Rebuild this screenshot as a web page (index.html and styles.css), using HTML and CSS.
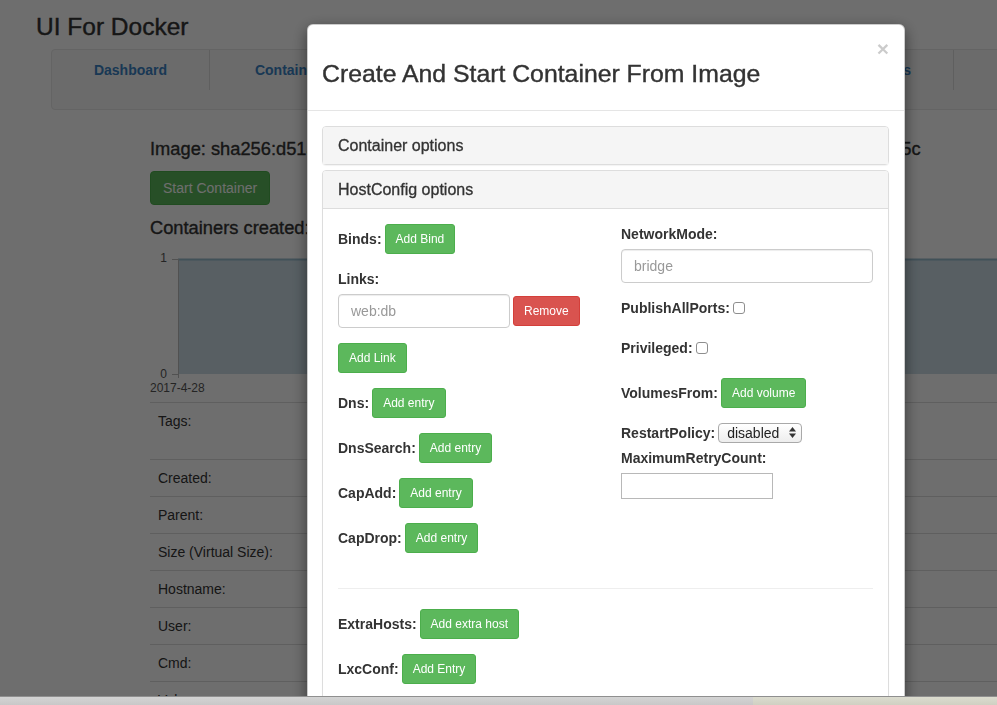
FILE: index.html
```html
<!DOCTYPE html>
<html>
<head>
<meta charset="utf-8">
<title>UI For Docker</title>
<link rel="stylesheet" href="styles.css">
</head>
<body>
<div class="page">
  <h1 class="brand">UI For Docker</h1>
  <nav class="topnav">
    <a class="tab tab-dash">Dashboard</a>
    <a class="tab tab-cont">Containers</a>
    <a class="tab tab-img">Images</a>
    <a class="tab tab-net">Networks</a>
    <a class="tab tab-vol">Volumes</a>
    <a class="tab tab-info">Info</a>
  </nav>
  <div class="content">
    <h3 class="image-title">Image: sha256:d51a7e3c9e2b4d6a8a0c1e3b5d7e9a2c4e6b8d0e1a3c5e7b9d2e4a6c8e0b135c</h3>
    <button class="btn btn-success btn-start">Start Container</button>
    <h3 class="sub-title">Containers created:</h3>
    <div class="chart">
      <svg class="chart-svg" width="850" height="162" viewBox="0 0 850 162">
        <rect x="28" y="19" width="822" height="115" fill="#cbdde6"/>
        <line x1="28" y1="19.5" x2="850" y2="19.5" stroke="#97bbcd" stroke-width="2"/>
        <line x1="28.5" y1="19" x2="28.5" y2="138" stroke="#bbbbbb" stroke-width="1"/>
        <line x1="22" y1="19.5" x2="28" y2="19.5" stroke="#bbbbbb" stroke-width="1"/>
        <line x1="22" y1="134.5" x2="28" y2="134.5" stroke="#bbbbbb" stroke-width="1"/>
        <text class="axis-label" x="17" y="22" text-anchor="end">1</text>
        <text class="axis-label" x="17" y="138" text-anchor="end">0</text>
        <text class="axis-label" x="0" y="152">2017-4-28</text>
      </svg>
    </div>
    <table class="details">
      <tr class="row-tall"><td>Tags:</td><td></td></tr>
      <tr><td>Created:</td><td></td></tr>
      <tr><td>Parent:</td><td></td></tr>
      <tr><td>Size (Virtual Size):</td><td></td></tr>
      <tr><td>Hostname:</td><td></td></tr>
      <tr><td>User:</td><td></td></tr>
      <tr><td>Cmd:</td><td></td></tr>
      <tr><td>Volumes:</td><td></td></tr>
    </table>
  </div>
</div>

<div class="backdrop"></div>

<div class="modal">
  <div class="modal-header">
    <h3 class="modal-title">Create And Start Container From Image</h3>
    <button class="close" type="button">&times;</button>
  </div>
  <div class="modal-body">
    <div class="panel">
      <div class="panel-heading"><h4 class="panel-title">Container options</h4></div>
    </div>
    <div class="panel panel-open">
      <div class="panel-heading"><h4 class="panel-title">HostConfig options</h4></div>
      <div class="panel-body">
        <div class="form-row">
          <div class="col col-left">
            <div class="fg inline">
              <label>Binds:</label>
              <button class="btn btn-sm btn-success">Add Bind</button>
            </div>
            <div class="fg">
              <label class="block-label">Links:</label>
              <div class="input-pair">
                <input class="form-control link-input" type="text" placeholder="web:db">
                <button class="btn btn-sm btn-danger">Remove</button>
              </div>
            </div>
            <div class="fg">
              <button class="btn btn-sm btn-success">Add Link</button>
            </div>
            <div class="fg inline">
              <label>Dns:</label>
              <button class="btn btn-sm btn-success">Add entry</button>
            </div>
            <div class="fg inline">
              <label>DnsSearch:</label>
              <button class="btn btn-sm btn-success">Add entry</button>
            </div>
            <div class="fg inline">
              <label>CapAdd:</label>
              <button class="btn btn-sm btn-success">Add entry</button>
            </div>
            <div class="fg inline">
              <label>CapDrop:</label>
              <button class="btn btn-sm btn-success">Add entry</button>
            </div>
          </div>
          <div class="col col-right">
            <div class="fg">
              <label class="block-label">NetworkMode:</label>
              <input class="form-control" type="text" placeholder="bridge">
            </div>
            <div class="fg check-group">
              <label>PublishAllPorts:</label>
              <input class="checkbox" type="checkbox">
            </div>
            <div class="fg check-group">
              <label>Privileged:</label>
              <input class="checkbox" type="checkbox">
            </div>
            <div class="fg inline">
              <label>VolumesFrom:</label>
              <button class="btn btn-sm btn-success">Add volume</button>
            </div>
            <div class="restart-row">
              <label>RestartPolicy:</label>
              <div class="select-wrap">
                <select class="select">
                  <option>disabled</option>
                  <option>always</option>
                  <option>on-failure</option>
                </select>
                <svg class="select-arrows" width="7" height="11" viewBox="0 0 7 11"><polygon points="0,4.5 3.5,0 7,4.5" fill="#333"/><polygon points="0,6.5 7,6.5 3.5,11" fill="#333"/></svg>
              </div>
            </div>
            <label class="block-label">MaximumRetryCount:</label>
            <input class="retry-input" type="number">
          </div>
        </div>
        <hr class="divider">
        <div class="form-row">
          <div class="col col-left">
            <div class="fg inline">
              <label>ExtraHosts:</label>
              <button class="btn btn-sm btn-success">Add extra host</button>
            </div>
            <div class="fg inline">
              <label>LxcConf:</label>
              <button class="btn btn-sm btn-success">Add Entry</button>
            </div>
          </div>
          <div class="col col-right"></div>
        </div>
      </div>
    </div>
  </div>
</div>

<div class="statusbar">
  <div class="status-left"></div>
  <div class="status-right"></div>
</div>
</body>
</html>
```

FILE: styles.css
```css
html, body {
  margin: 0;
  padding: 0;
  height: 100%;
  overflow: hidden;
}

body {
  font-family: "Liberation Sans", Arial, Helvetica, sans-serif;
  font-size: 14px;
  line-height: 20px;
  color: #333;
  background: #fff;
}

.page {
  padding-top: 13px;
}

.brand {
  margin: 0 0 9px 36px;
  font-size: 24.5px;
  line-height: 27px;
  font-weight: normal;
  color: #333;
  -webkit-text-stroke: 0.4px #333;
}

.topnav {
  margin-left: 51px;
  width: 1000px;
  height: 61px;
  box-sizing: border-box;
  border: 1px solid #e7e7e7;
  border-radius: 4px;
  background: #f8f8f8;
  display: flex;
  align-items: flex-start;
}

.tab {
  display: block;
  box-sizing: border-box;
  padding: 10px 0;
  text-align: center;
  font-weight: bold;
  color: #3a82c4;
  text-decoration: none;
  border-right: 1px solid #dcdcdc;
  flex: none;
}

.tab-dash { width: 158px; }
.tab-cont { width: 164px; }
.tab-img { width: 219px; }
.tab-net { width: 219px; }
.tab-vol { width: 142px; }
.tab-info { width: 150px; }

.content {
  margin-left: 150px;
  width: 1000px;
}

.image-title {
  margin: 29px 0 12px;
  font-size: 18.3px;
  line-height: 20px;
  font-weight: normal;
  white-space: nowrap;
  color: #333;
  -webkit-text-stroke: 0.35px #333;
}

.sub-title {
  margin: 13px 0 2px;
  font-size: 18.3px;
  line-height: 20px;
  font-weight: normal;
  color: #333;
  -webkit-text-stroke: 0.35px #333;
}

.btn {
  display: inline-block;
  font-family: inherit;
  border: 1px solid transparent;
  cursor: pointer;
  margin: 0;
}

.btn-start {
  font-size: 14px;
  line-height: 20px;
  padding: 6px 12px;
  border-radius: 4px;
}

.btn-sm {
  font-size: 12px;
  line-height: 18px;
  padding: 5px 10px;
  border-radius: 3px;
}

.btn-success {
  background: #5cb85c;
  border-color: #4cae4c;
  color: #fff;
}

.btn-danger {
  background: #d9534f;
  border-color: #d43f3a;
  color: #fff;
}

.chart-svg {
  display: block;
}

.axis-label {
  font-family: "Liberation Sans", Arial, sans-serif;
  font-size: 12px;
  fill: #555;
}

.details {
  width: 1000px;
  border-collapse: collapse;
}

.details td {
  border-top: 1px solid #ddd;
  padding: 8px;
  line-height: 20px;
  vertical-align: top;
}

.details td:first-child {
  width: 200px;
}

.row-tall td {
  padding-bottom: 28px;
}

.backdrop {
  position: fixed;
  left: 0;
  top: 0;
  right: 0;
  bottom: 0;
  background: rgba(0, 0, 0, 0.57);
}

.modal {
  position: fixed;
  left: 307px;
  top: 24px;
  width: 598px;
  height: 720px;
  box-sizing: border-box;
  background: #fff;
  border: 1px solid rgba(0, 0, 0, 0.2);
  border-radius: 6px;
  box-shadow: 0 5px 15px rgba(0, 0, 0, 0.5);
}

.modal-header {
  display: flex;
  justify-content: space-between;
  align-items: flex-start;
  padding: 15px;
  border-bottom: 1px solid #e5e5e5;
}

.modal-title {
  margin: 20px 0 8px -1px;
  font-size: 24.8px;
  line-height: 27px;
  font-weight: normal;
  color: #333;
  -webkit-text-stroke: 0.4px #333;
}

.close {
  margin-top: -2px;
  padding: 0;
  border: 0;
  background: transparent;
  font-family: "Liberation Sans", Arial, sans-serif;
  font-size: 21px;
  font-weight: bold;
  line-height: 1;
  color: #000;
  opacity: 0.2;
  text-shadow: 0 1px 0 #fff;
}

.modal-body {
  padding: 15px 15px 15px 14px;
}

.panel {
  border: 1px solid #ddd;
  border-radius: 4px;
  background: #fff;
  box-shadow: 0 1px 1px rgba(0, 0, 0, 0.05);
}

.panel + .panel {
  margin-top: 5px;
}

.panel-heading {
  padding: 10px 15px;
  background: #f5f5f5;
  border-radius: 3px 3px 0 0;
}

.panel-open .panel-heading {
  border-bottom: 1px solid #ddd;
}

.panel-title {
  margin: 0;
  font-size: 16px;
  line-height: 17px;
  font-weight: normal;
  color: #333;
  -webkit-text-stroke: 0.3px #333;
}

.panel-body {
  padding: 15px;
}

.form-row {
  display: flex;
}

.col-left {
  width: 283px;
  flex: none;
}

.col-right {
  flex: 1;
}

label {
  font-weight: bold;
  color: #333;
}

.fg {
  margin-bottom: 15px;
}

.inline {
  display: flex;
  align-items: center;
  gap: 3px;
}

.block-label {
  display: block;
  margin-bottom: 5px;
}

.input-pair {
  display: flex;
  align-items: center;
  gap: 3px;
}

.form-control {
  display: block;
  box-sizing: border-box;
  width: 100%;
  height: 34px;
  padding: 6px 12px;
  font-family: inherit;
  font-size: 14px;
  line-height: 20px;
  color: #555;
  background: #fff;
  border: 1px solid #ccc;
  border-radius: 4px;
  box-shadow: inset 0 1px 1px rgba(0, 0, 0, 0.075);
}

.form-control::placeholder {
  color: #999;
}

.link-input {
  width: 172px;
}

.check-group {
  display: flex;
  align-items: center;
  gap: 3px;
  height: 20px;
  padding-bottom: 5px;
}

.checkbox {
  appearance: none;
  -webkit-appearance: none;
  width: 12px;
  height: 12px;
  margin: 0;
  border: 1px solid #8e8e8e;
  border-radius: 3px;
  background: #fff;
  box-sizing: border-box;
}

.restart-row {
  display: flex;
  align-items: center;
  gap: 3px;
  height: 20px;
  margin-bottom: 5px;
}

.select-wrap {
  position: relative;
  width: 84px;
  height: 20px;
}

.select {
  appearance: none;
  -webkit-appearance: none;
  width: 84px;
  height: 20px;
  box-sizing: border-box;
  margin: 0;
  padding: 0 0 0 8px;
  border: 1px solid #a9a9a9;
  border-radius: 4px;
  background: linear-gradient(#ffffff, #ededed);
  font-family: inherit;
  font-size: 14px;
  line-height: 18px;
  color: #222;
}

.select-arrows {
  position: absolute;
  right: 6px;
  top: 4px;
  pointer-events: none;
}

.retry-input {
  display: block;
  box-sizing: border-box;
  width: 152px;
  height: 26px;
  margin: 0;
  border: 1px solid #b8b8b8;
  border-radius: 0;
  background: #fff;
}

.divider {
  margin: 20px 0 20px;
  border: 0;
  border-top: 1px solid #eee;
}

.statusbar {
  position: fixed;
  left: 0;
  right: 0;
  bottom: 0;
  height: 8px;
  display: flex;
  border-top: 1px solid #8f8f8f;
}

.status-left {
  width: 753px;
  background: linear-gradient(#d4d4d4, #c8c8c8);
}

.status-right {
  flex: 1;
  background: linear-gradient(#dcdccf, #d0d0c2);
}
```
